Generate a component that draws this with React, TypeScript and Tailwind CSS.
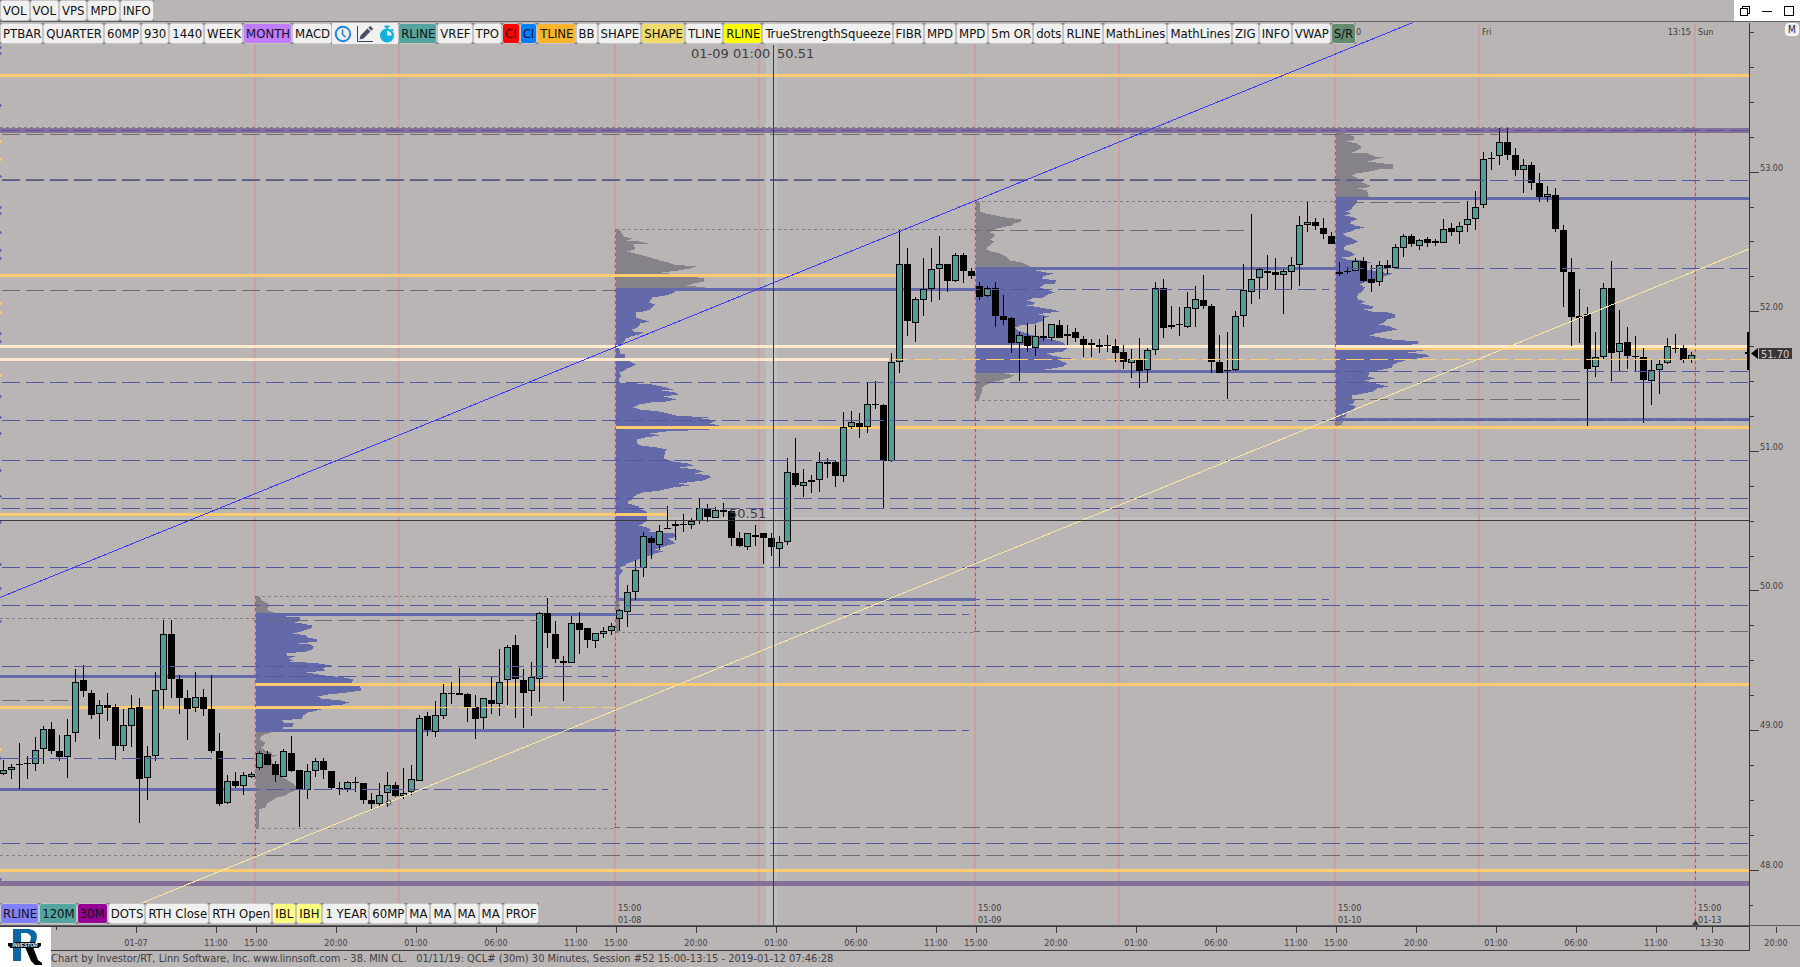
import clsx from "clsx";

type Tool = { label: string; color?: string; wide?: boolean };

const TOP_TOOLS = ["VOL", "VOL", "VPS", "MPD", "INFO"];

const TOOLS_LEFT: Tool[] = [
  { label: "PTBAR" },
  { label: "QUARTER" },
  { label: "60MP" },
  { label: "930" },
  { label: "1440" },
  { label: "WEEK" },
  { label: "MONTH", color: "bg-[#bf7cff]" },
  { label: "MACD" },
];

const TOOLS_RIGHT: Tool[] = [
  { label: "RLINE", color: "bg-[#53a5a2]" },
  { label: "VREF" },
  { label: "TPO" },
  { label: "CI", color: "bg-[#ff0000]" },
  { label: "CI", color: "bg-[#0080ff]" },
  { label: "TLINE", color: "bg-[#ffb42e]" },
  { label: "BB" },
  { label: "SHAPE" },
  { label: "SHAPE", color: "bg-[#f0dc6a]" },
  { label: "TLINE" },
  { label: "RLINE", color: "bg-[#ffff00]" },
  { label: "TrueStrengthSqueeze" },
  { label: "FIBR" },
  { label: "MPD" },
  { label: "MPD" },
  { label: "5m OR" },
  { label: "dots" },
  { label: "RLINE" },
  { label: "MathLines" },
  { label: "MathLines" },
  { label: "ZIG" },
  { label: "INFO" },
  { label: "VWAP" },
  { label: "S/R", color: "bg-[#648a70]" },
];

const BOTTOM_TOOLS: Tool[] = [
  { label: "RLINE", color: "bg-[#8080ff]" },
  { label: "120M", color: "bg-[#53a5a2]" },
  { label: "30M", color: "bg-[#930093]" },
  { label: "DOTS" },
  { label: "RTH Close" },
  { label: "RTH Open" },
  { label: "IBL", color: "bg-[#ffff80]" },
  { label: "IBH", color: "bg-[#ffff80]" },
  { label: "1 YEAR" },
  { label: "60MP" },
  { label: "MA" },
  { label: "MA" },
  { label: "MA" },
  { label: "MA" },
  { label: "PROF" },
];

const UP = 1;
const DN = 0;

// high, body top, body bottom, low, direction
const CANDLES = [
  [760, 770, 774, 775, UP], [764, 767, 770, 779, UP], [743, 764, 765, 789, DN], [756, 763, 764, 779, DN],
  [737, 750, 764, 771, UP], [726, 729, 749, 764, UP], [722, 729, 751, 754, DN], [735, 751, 757, 761, DN],
  [719, 735, 757, 778, UP], [669, 682, 733, 742, UP], [665, 680, 691, 697, DN], [690, 693, 715, 719, DN],
  [700, 705, 714, 739, UP], [693, 705, 708, 721, DN], [704, 707, 746, 760, DN], [709, 725, 746, 751, UP],
  [695, 708, 726, 747, UP], [698, 707, 779, 823, DN], [746, 756, 778, 800, UP], [672, 690, 756, 761, UP],
  [620, 634, 690, 709, UP], [620, 634, 679, 698, DN], [675, 679, 698, 714, DN], [690, 698, 709, 740, DN],
  [672, 697, 708, 712, UP], [689, 697, 709, 716, DN], [675, 709, 751, 753, DN], [733, 751, 804, 806, DN],
  [775, 781, 803, 804, UP], [772, 781, 786, 788, DN], [772, 775, 786, 795, UP], [772, 774, 777, 778, UP],
  [751, 753, 768, 770, UP], [751, 754, 765, 765, DN], [761, 764, 775, 782, DN], [749, 751, 777, 777, UP],
  [736, 753, 771, 772, DN], [770, 770, 789, 827, DN], [764, 771, 790, 799, UP], [758, 761, 771, 777, UP],
  [758, 761, 770, 779, DN], [771, 771, 788, 790, DN], [782, 788, 789, 795, DN], [781, 782, 789, 792, UP],
  [777, 782, 783, 792, DN], [783, 783, 800, 804, DN], [793, 800, 804, 809, DN], [783, 795, 804, 806, UP],
  [772, 785, 793, 807, UP], [782, 785, 796, 797, DN], [768, 793, 796, 799, UP], [765, 779, 792, 795, UP],
  [715, 718, 781, 781, UP], [712, 716, 730, 736, DN], [701, 715, 732, 737, UP], [684, 693, 716, 719, UP],
  [682, 693, 694, 704, DN], [668, 693, 695, 695, DN], [693, 694, 707, 722, DN], [695, 707, 719, 739, DN],
  [698, 698, 718, 729, UP], [677, 700, 704, 714, DN], [649, 682, 704, 716, UP], [645, 647, 680, 705, UP],
  [635, 645, 679, 718, DN], [669, 680, 693, 728, DN], [662, 677, 691, 716, UP], [612, 613, 679, 702, UP],
  [598, 613, 633, 648, DN], [621, 634, 659, 663, DN], [656, 661, 663, 701, DN], [616, 623, 663, 663, UP],
  [612, 623, 630, 654, DN], [628, 628, 640, 648, DN], [633, 633, 641, 648, UP], [627, 631, 634, 638, UP],
  [623, 626, 631, 635, UP], [609, 610, 619, 631, UP], [585, 592, 612, 627, UP], [560, 570, 592, 600, UP],
  [532, 536, 568, 577, UP], [536, 538, 543, 559, DN], [525, 531, 545, 550, UP], [506, 528, 529, 529, DN],
  [521, 524, 526, 540, DN], [514, 524, 525, 532, DN], [518, 521, 525, 529, UP], [499, 508, 521, 524, UP],
  [504, 509, 517, 522, DN], [507, 510, 518, 518, UP], [503, 510, 512, 517, DN], [511, 511, 538, 546, DN],
  [532, 538, 546, 547, DN], [533, 533, 547, 550, UP], [525, 535, 537, 546, DN], [533, 533, 538, 564, DN],
  [533, 538, 547, 556, DN], [536, 542, 549, 567, UP], [458, 472, 542, 545, UP], [438, 473, 485, 487, DN],
  [469, 482, 486, 497, UP], [475, 480, 482, 493, DN], [452, 462, 480, 492, UP], [458, 462, 464, 478, DN],
  [461, 462, 476, 487, DN], [412, 427, 476, 482, UP], [411, 422, 427, 429, UP], [413, 423, 427, 438, DN],
  [383, 404, 427, 433, UP], [381, 404, 405, 409, DN], [404, 405, 461, 508, DN], [353, 362, 461, 462, UP],
  [230, 264, 362, 373, UP], [248, 264, 321, 336, DN], [297, 299, 323, 342, UP], [258, 289, 300, 316, UP],
  [248, 269, 289, 302, UP], [236, 264, 269, 300, UP], [264, 264, 281, 292, DN], [253, 255, 281, 282, UP],
  [253, 255, 271, 283, DN], [268, 271, 276, 279, DN], [282, 286, 297, 300, DN], [286, 288, 296, 297, UP],
  [282, 288, 316, 327, DN], [295, 316, 320, 325, DN], [317, 318, 343, 353, DN], [332, 335, 343, 381, UP],
  [323, 336, 346, 352, DN], [325, 336, 348, 356, UP], [317, 336, 338, 341, DN], [324, 324, 338, 341, UP],
  [320, 325, 338, 338, DN], [325, 334, 336, 345, DN], [328, 332, 338, 342, DN], [336, 339, 345, 357, DN],
  [339, 343, 345, 357, DN], [339, 345, 347, 353, DN], [335, 345, 346, 352, DN], [339, 346, 353, 362, DN],
  [345, 352, 362, 369, DN], [349, 359, 363, 378, UP], [338, 359, 371, 388, DN], [348, 350, 370, 382, UP],
  [282, 288, 350, 355, UP], [279, 288, 328, 338, DN], [306, 325, 327, 329, DN], [307, 324, 325, 336, DN],
  [292, 307, 327, 328, UP], [286, 299, 309, 327, UP], [275, 300, 306, 309, DN], [304, 306, 362, 373, DN],
  [335, 362, 373, 373, DN], [332, 370, 371, 399, DN], [311, 316, 370, 371, UP], [264, 290, 316, 327, UP],
  [214, 279, 292, 304, UP], [268, 269, 278, 299, UP], [255, 271, 273, 290, DN], [258, 272, 275, 290, DN],
  [269, 271, 275, 314, UP], [257, 265, 272, 290, UP], [216, 225, 265, 286, UP], [202, 222, 225, 232, UP],
  [218, 222, 226, 230, DN], [218, 228, 234, 239, DN], [232, 236, 244, 244, DN], [262, 272, 274, 276, DN],
  [267, 271, 272, 274, DN], [258, 261, 271, 271, UP], [257, 261, 281, 282, DN], [265, 279, 283, 292, DN],
  [261, 265, 282, 286, UP], [260, 265, 268, 274, DN], [244, 247, 268, 269, UP], [234, 236, 248, 257, UP],
  [234, 236, 244, 247, DN], [239, 240, 246, 250, UP], [237, 239, 243, 247, DN], [239, 241, 243, 246, DN],
  [219, 229, 243, 243, UP], [223, 228, 232, 236, DN], [222, 226, 232, 244, UP], [201, 219, 225, 232, UP],
  [191, 207, 219, 230, UP], [152, 159, 205, 208, UP], [152, 158, 159, 170, DN], [128, 142, 156, 165, UP],
  [128, 142, 155, 160, DN], [148, 155, 170, 176, DN], [159, 165, 170, 193, UP], [162, 165, 183, 190, DN],
  [173, 183, 197, 202, DN], [186, 194, 197, 202, UP], [188, 195, 229, 232, DN], [225, 230, 272, 307, DN],
  [258, 272, 317, 346, DN], [289, 316, 318, 343, DN], [307, 314, 369, 426, DN], [332, 357, 367, 377, UP],
  [283, 288, 357, 360, UP], [261, 288, 353, 381, DN], [310, 343, 352, 371, UP], [327, 342, 356, 369, DN],
  [336, 356, 357, 371, DN], [348, 357, 380, 423, DN], [360, 370, 381, 405, UP], [360, 364, 370, 394, UP],
  [338, 346, 363, 364, UP], [334, 348, 349, 353, DN], [345, 348, 360, 363, DN], [352, 355, 360, 363, UP],
];

const BLUE = "#6469a9";
const GREY = "#858289";

// volume profiles, [y, width] pairs growing right from x
const PROFILES: { x: number; fill: string; rows: number[][] }[] = [
  { x: 256, fill: GREY, rows: [[596, 3], [600, 6], [603, 12], [606, 13], [608, 11], [610, 12], [612, 18], [613, 18]] },
  {
    x: 256,
    fill: BLUE,
    rows: [
      [613, 30], [616, 30], [617, 44], [620, 44], [622, 39], [623, 46], [625, 56], [627, 56], [629, 51], [631, 45],
      [633, 37], [635, 50], [637, 52], [639, 61], [641, 61], [643, 43], [644, 54], [646, 58], [649, 56], [651, 50],
      [653, 30], [655, 31], [656, 39], [658, 33], [660, 37], [661, 34], [662, 50], [663, 63], [665, 75], [667, 69],
      [668, 67], [670, 69], [672, 51], [675, 69], [677, 88], [679, 97], [682, 96], [686, 104], [690, 105], [692, 91],
      [694, 72], [696, 62], [698, 65], [700, 85], [702, 93], [704, 87], [705, 75], [707, 72], [710, 61], [712, 52],
      [715, 47], [718, 46], [720, 26], [722, 28], [723, 38], [726, 36], [727, 27], [729, 27], [731, 27],
    ],
  },
  {
    x: 256,
    fill: GREY,
    rows: [
      [731, 27], [732, 15], [734, 8], [736, 5], [739, 4], [742, 9], [745, 8], [747, 5], [750, 9], [752, 15], [754, 16],
      [755, 21], [757, 15], [765, 17], [770, 18], [775, 24], [778, 29], [781, 34], [785, 39], [789, 42], [792, 34],
      [795, 29], [797, 21], [800, 16], [803, 11], [807, 9], [809, 3], [828, 3],
    ],
  },
  {
    x: 616,
    fill: GREY,
    rows: [
      [229, 2], [230, 4], [236, 8], [238, 16], [240, 11], [241, 23], [243, 32], [244, 17], [247, 19], [249, 18],
      [251, 11], [253, 19], [255, 27], [257, 34], [260, 44], [262, 52], [264, 58], [266, 80], [268, 74], [270, 62],
      [272, 46], [274, 60], [276, 76], [278, 88], [281, 88], [283, 78], [285, 71], [287, 89], [288, 89],
    ],
  },
  {
    x: 616,
    fill: BLUE,
    rows: [
      [288, 60], [292, 58], [293, 56], [295, 49], [297, 36], [299, 35], [302, 33], [304, 39], [306, 37], [309, 34],
      [311, 27], [312, 20], [317, 20], [319, 26], [321, 33], [323, 24], [325, 23], [327, 21], [329, 16], [331, 18],
      [332, 27], [334, 23], [336, 15], [338, 10], [342, 7], [344, 4], [347, 3], [353, 4], [354, 9], [357, 9], [359, 4],
      [361, 14], [364, 20], [366, 16], [368, 11], [370, 8], [372, 3], [376, 5], [378, 3], [382, 3], [383, 21],
      [384, 36], [386, 46], [389, 57], [390, 46], [392, 59], [394, 62], [396, 48], [399, 60], [401, 50], [402, 35],
      [404, 23], [407, 17], [409, 24], [411, 43], [413, 52], [415, 60], [417, 92], [418, 86], [420, 100], [423, 94],
      [425, 103], [427, 98], [429, 93], [431, 50], [433, 34], [435, 43], [437, 29], [439, 21], [443, 21], [445, 25],
      [447, 41], [449, 51], [451, 49], [458, 48], [461, 57], [463, 72], [465, 77], [467, 64], [469, 80], [471, 87],
      [473, 79], [475, 93], [477, 95], [480, 87], [482, 71], [483, 63], [485, 73], [487, 57], [490, 44], [492, 27],
      [494, 21], [496, 18], [499, 16], [501, 12], [503, 12], [506, 23], [508, 22], [510, 28], [512, 31], [520, 31],
      [523, 27], [525, 23], [527, 31], [529, 35], [531, 33], [533, 58], [536, 61], [538, 52], [541, 57], [543, 59],
      [545, 51], [547, 45], [549, 39], [551, 47], [553, 39], [555, 34], [558, 24], [561, 17], [563, 11], [565, 9],
      [567, 3], [570, 7], [573, 5], [575, 3], [601, 3],
    ],
  },
  { x: 616, fill: GREY, rows: [[601, 3], [632, 3]] },
  {
    x: 976,
    fill: GREY,
    rows: [
      [201, 2], [203, 4], [211, 4], [213, 10], [214, 15], [216, 24], [217, 30], [219, 45], [221, 45], [223, 38],
      [225, 36], [226, 30], [228, 21], [230, 16], [232, 14], [234, 19], [237, 17], [239, 14], [241, 18], [244, 15],
      [246, 12], [249, 10], [251, 15], [253, 24], [256, 30], [260, 34], [262, 46], [264, 50], [266, 54], [267, 55],
    ],
  },
  {
    x: 976,
    fill: BLUE,
    rows: [
      [267, 57], [270, 60], [272, 70], [273, 77], [276, 67], [278, 66], [280, 80], [283, 79], [284, 68], [287, 64],
      [290, 73], [292, 78], [294, 72], [297, 67], [298, 56], [300, 51], [302, 59], [304, 57], [305, 51], [307, 64],
      [309, 76], [311, 83], [313, 67], [314, 63], [316, 73], [318, 66], [320, 67], [323, 60], [325, 44], [327, 39],
      [330, 42], [333, 51], [337, 64], [339, 77], [342, 87], [345, 90], [348, 91], [351, 87], [353, 71], [355, 76],
      [357, 85], [358, 95], [360, 84], [363, 91], [366, 87], [368, 76], [370, 61], [373, 54],
    ],
  },
  {
    x: 976,
    fill: GREY,
    rows: [
      [373, 29], [375, 38], [377, 34], [380, 24], [382, 14], [384, 11], [387, 6], [392, 6], [395, 4], [399, 3], [401, 3],
    ],
  },
  {
    x: 1336,
    fill: GREY,
    rows: [
      [133, 9], [136, 18], [139, 18], [141, 11], [143, 21], [146, 25], [148, 25], [150, 21], [152, 16], [153, 32],
      [156, 39], [157, 47], [159, 39], [161, 32], [163, 48], [164, 57], [168, 57], [169, 42], [171, 33], [173, 20],
      [175, 16], [178, 22], [180, 26], [182, 26], [185, 34], [187, 31], [188, 22], [190, 31], [194, 32], [197, 33],
    ],
  },
  {
    x: 1336,
    fill: BLUE,
    rows: [
      [197, 22], [202, 21], [204, 19], [207, 16], [209, 15], [211, 10], [213, 15], [215, 9], [217, 18], [219, 21],
      [221, 15], [223, 14], [225, 19], [227, 28], [229, 19], [231, 15], [233, 7], [235, 9], [238, 16], [241, 22],
      [243, 18], [245, 10], [247, 8], [249, 8], [251, 14], [254, 19], [256, 14], [257, 6], [259, 11], [260, 26],
      [262, 35], [264, 24], [267, 27], [269, 31], [271, 40], [273, 56], [275, 51], [277, 44], [280, 44], [282, 28],
      [284, 24], [287, 29], [290, 27], [294, 22], [296, 21], [299, 22], [301, 29], [303, 25], [306, 37], [308, 36],
      [309, 28], [311, 36], [312, 52], [314, 59], [317, 59], [319, 51], [322, 48], [324, 43], [326, 54], [329, 61],
      [331, 50], [333, 39], [335, 34], [337, 44], [339, 56], [341, 82], [343, 82], [345, 70], [348, 76], [350, 87],
      [352, 72], [354, 90], [356, 93], [358, 81], [360, 69], [362, 62], [364, 57], [367, 56], [369, 47], [372, 33],
      [376, 32], [378, 39], [380, 29], [382, 36], [384, 44], [386, 52], [388, 41], [391, 37], [393, 27], [395, 16],
      [398, 16], [400, 19], [403, 17], [404, 14], [406, 20], [409, 17], [412, 11], [415, 10], [417, 7], [420, 6],
    ],
  },
  { x: 1336, fill: GREY, rows: [[420, 6], [421, 7], [424, 6], [425, 3], [426, 3]] },
];

const ORANGE = "#ffcb70";
const CREAM = "#ffe9cc";
const PURPLE = "#846f98";
const DASH_BLUE = "#5456a0";
const DASH_GREY = "#6e6c6e";

// [y, height, x1, x2, fill]
const BANDS: [number, number, number, number, string][] = [
  [74, 3, 0, 1749, ORANGE],
  [128, 5, 0, 1749, PURPLE],
  [197, 3, 1336, 1749, BLUE],
  [267, 3, 976, 1336, BLUE],
  [274, 3, 0, 896, ORANGE],
  [288, 3, 616, 976, BLUE],
  [348, 2, 1336, 1749, ORANGE],
  [345, 3, 0, 1749, CREAM],
  [358, 3, 0, 889, CREAM],
  [370, 3, 976, 1336, BLUE],
  [418, 3, 1336, 1749, BLUE],
  [426, 3, 616, 1749, ORANGE],
  [513, 3, 0, 667, ORANGE],
  [598, 3, 616, 976, BLUE],
  [613, 3, 256, 616, BLUE],
  [675, 3, 0, 256, BLUE],
  [683, 3, 256, 1749, ORANGE],
  [706, 3, 0, 435, ORANGE],
  [729, 3, 256, 616, BLUE],
  [788, 3, 0, 256, BLUE],
  [869, 3, 0, 1749, ORANGE],
  [881, 5, 0, 1749, PURPLE],
];

// [y, x1, x2, stroke]
const DASHED: [number, number, number, string][] = [
  [130, 0, 1749, DASH_BLUE],
  [134, 0, 1498, DASH_GREY],
  [179, 0, 1480, DASH_GREY],
  [180, 0, 1749, DASH_BLUE],
  [202, 1334, 1466, DASH_GREY],
  [230, 974, 1250, DASH_GREY],
  [268, 1336, 1749, DASH_BLUE],
  [289, 976, 1329, DASH_BLUE],
  [290, 0, 616, DASH_GREY],
  [359, 892, 1749, ORANGE],
  [371, 1336, 1749, DASH_BLUE],
  [382, 0, 1749, DASH_BLUE],
  [399, 1334, 1586, DASH_GREY],
  [420, 0, 1749, DASH_BLUE],
  [460, 0, 1749, DASH_BLUE],
  [498, 0, 1749, DASH_BLUE],
  [508, 0, 1749, DASH_BLUE],
  [567, 0, 1749, DASH_BLUE],
  [599, 976, 1329, DASH_BLUE],
  [605, 0, 1749, DASH_BLUE],
  [614, 616, 969, DASH_BLUE],
  [620, 254, 537, DASH_GREY],
  [631, 974, 1749, DASH_GREY],
  [666, 0, 1749, DASH_BLUE],
  [676, 256, 608, DASH_BLUE],
  [700, 0, 68, DASH_GREY],
  [707, 436, 615, ORANGE],
  [730, 616, 969, DASH_BLUE],
  [758, 0, 254, DASH_BLUE],
  [789, 256, 608, DASH_BLUE],
  [827, 614, 1749, DASH_GREY],
  [843, 0, 1749, DASH_BLUE],
  [855, 254, 1749, DASH_GREY],
];

// [y, x1, x2]
const DOTTED = [
  [127, 0, 1695],
  [201, 976, 1336],
  [229, 616, 976],
  [400, 976, 1336],
  [596, 256, 616],
  [618, 0, 256],
  [632, 616, 976],
  [828, 256, 616],
  [855, 0, 256],
];

const DAY_LINES = [254, 398, 614, 758, 974, 1118, 1334, 1478, 1694];
const SESSION_LINES = [[255, 596, 855], [615, 229, 827], [975, 201, 631], [1335, 128, 426], [1695, 133, 922]];

const LEFT_MARKS: [number, string][] = [
  [47, BLUE], [53, BLUE], [105, BLUE], [141, ORANGE], [159, ORANGE], [176, BLUE], [207, BLUE], [213, BLUE],
  [232, BLUE], [250, BLUE], [258, BLUE], [303, ORANGE], [312, ORANGE], [333, BLUE], [341, BLUE], [375, ORANGE],
  [396, BLUE], [417, BLUE], [433, BLUE], [470, BLUE], [496, BLUE], [522, BLUE], [564, BLUE], [588, BLUE],
  [621, BLUE], [749, ORANGE], [758, BLUE], [879, BLUE],
];

const SESSIONS: [number, string][] = [[618, "01-08"], [978, "01-09"], [1338, "01-10"], [1698, "01-13"]];

const PRICES: [number, string][] = [
  [171, "53.00"], [310, "52.00"], [450, "51.00"], [589, "50.00"], [728, "49.00"], [868, "48.00"],
];

const TIMES: [number, string][] = [
  [136, "01-07"], [216, "11:00"], [256, "15:00"], [336, "20:00"], [416, "01:00"], [496, "06:00"], [576, "11:00"],
  [616, "15:00"], [696, "20:00"], [776, "01:00"], [856, "06:00"], [936, "11:00"], [976, "15:00"], [1056, "20:00"],
  [1136, "01:00"], [1216, "06:00"], [1296, "11:00"], [1336, "15:00"], [1416, "20:00"], [1496, "01:00"],
  [1576, "06:00"], [1656, "11:00"], [1712, "13:30"], [1776, "20:00"],
];

const profilePath = (x: number, rows: number[][]) => {
  let d = `M${x} ${rows[0][0]}`;
  for (let i = 0; i < rows.length - 1; i++) {
    const [y0, w0] = rows[i];
    const [y1, w1] = rows[i + 1];
    for (let y = y0; y < y1; y++) {
      d += `H${x + Math.round(w0 + ((w1 - w0) * (y - y0)) / (y1 - y0))}V${y + 1}`;
    }
  }
  return `${d}H${x}Z`;
};

const ToolButton = ({ label, color = "bg-[#f0f0f0]", wide = label.length <= 3 }: Tool) => (
  <button
    type="button"
    className={clsx(
      "h-[21px] shrink-0 whitespace-nowrap rounded-[3px] border border-[#c6c4c4] text-[13px] leading-[18px] text-[#101010]",
      wide ? "px-[2px]" : "pl-[2px] pr-px",
      color
    )}
  >
    {label}
  </button>
);

const IconTools = () => (
  <div className="flex h-[21px] w-[66px] shrink-0 items-center justify-around bg-[#f0f0f0]">
    <button type="button" aria-label="Clock">
      <svg viewBox="0 0 18 18" className="size-[18px]" fill="none" stroke="#1e86dc" strokeWidth="2">
        <circle cx="9" cy="9" r="7.2" />
        <path d="M8.5 4.5V9.5L11.5 12.2" strokeWidth="1.6" />
      </svg>
    </button>
    <button type="button" aria-label="Draw">
      <svg viewBox="0 0 18 18" className="size-[18px]">
        <path d="M1.5 1V16.5H17" fill="none" stroke="#3c4356" strokeWidth="1" />
        <path d="M3.5 14.5L4.6 10.4L11.4 3.6L14.4 6.6L7.6 13.4Z" fill="#44506b" />
        <path d="M12.3 2.7L13.6 1.4Q14.3 .9 15 1.5L16.5 3Q17 3.7 16.5 4.4L15.3 5.7Z" fill="#44506b" />
      </svg>
    </button>
    <button type="button" aria-label="Timer">
      <svg viewBox="0 0 18 18" className="size-[18px]">
        <circle cx="9" cy="10.5" r="7" fill="#12b0dc" />
        <rect x="6.5" y="0.5" width="5" height="2" fill="#12b0dc" />
        <path d="M8.2 2H9.8V4H8.2ZM14 3.4L16 5.2L15 6.2L13 4.5Z" fill="#12b0dc" />
        <path d="M9 10.5V5.8A4.7 4.7 0 0 1 13.7 10.5Z" fill="#f0f0f0" />
      </svg>
    </button>
  </div>
);

const WindowControls = () => (
  <div className="flex w-[66px] items-center justify-between bg-white px-[5px]">
    <button type="button" aria-label="Restore">
      <svg viewBox="0 0 12 12" className="size-3" fill="none" stroke="#000" shapeRendering="crispEdges">
        <path d="M1.5 3.5H8.5V10.5H1.5ZM3.5 3.5V1.5H10.5V8.5H8.5" />
      </svg>
    </button>
    <button type="button" aria-label="Minimize">
      <svg viewBox="0 0 12 12" className="size-3" stroke="#000" shapeRendering="crispEdges">
        <path d="M1 6.5H11" />
      </svg>
    </button>
    <button type="button" aria-label="Maximize">
      <svg viewBox="0 0 12 12" className="size-3" fill="none" stroke="#000" shapeRendering="crispEdges">
        <path d="M1.5 1.5H10.5V10.5H1.5Z" />
      </svg>
    </button>
  </div>
);

const Chart = () => (
  <svg viewBox="0 22 1800 905" className="block w-full" fontSize="9" fill="#3f3d42">
    <g shapeRendering="crispEdges">
      {/* cursor highlight */}
      <rect x="766" y="22" width="11" height="903" fill="#c1c0c0" />
      <rect x="0" y="517" width="1749" height="3" fill="#c1c0c0" />

      {DAY_LINES.map((x) => (
        <rect key={x} x={x} y="23" width="2" height="902" fill="#cf9e9e" />
      ))}

      {PROFILES.map((p, i) => (
        <path key={i} d={profilePath(p.x, p.rows)} fill={p.fill} />
      ))}

      {BANDS.map(([y, h, x1, x2, fill]) => (
        <rect key={`${y}-${x1}`} x={x1} y={y} width={x2 - x1} height={h} fill={fill} />
      ))}

      {DOTTED.map(([y, x1, x2]) => (
        <path key={y} d={`M${x1} ${y + 0.5}H${x2}`} stroke="#807d84" strokeDasharray="3 3" />
      ))}
      {SESSION_LINES.map(([x, y1, y2]) => (
        <path key={x} d={`M${x + 0.5} ${y1}V${y2}`} stroke="#77707a" strokeDasharray="3 3" />
      ))}

      {CANDLES.map(([high, top, bottom, low, dir], i) => (
        <g key={i}>
          <rect x={i * 8 + 3} y={high} width="1" height={low - high} fill="#000" />
          <rect x={i * 8} y={top} width="7" height={bottom - top} fill="#000" />
          {dir === UP && <rect x={i * 8 + 1} y={top + 1} width="5" height={Math.max(bottom - top - 2, 1)} fill="#529c99" />}
        </g>
      ))}

      {DASHED.map(([y, x1, x2, stroke]) => (
        <path
          key={`${y}-${x1}`}
          d={`M${x1} ${y + 0.5}H${x2}`}
          stroke={stroke}
          strokeDasharray="18 6"
          strokeDashoffset={(x1 + 22) % 24}
        />
      ))}

      {LEFT_MARKS.map(([y, fill]) => (
        <path key={y} d={`M0 ${y - 1}H1V${y}H2V${y + 1}H1V${y + 2}H0Z`} fill={fill} />
      ))}

      {/* trend lines */}
      <path d="M0 597.5L1413 22.5" stroke="#3c3cff" />
      <path d="M142 903L450 777.5L1749 249" fill="none" stroke="#fbe7a2" />

      {/* crosshair */}
      <rect x="0" y="520" width="1749" height="1" fill="#3a393c" />
      <rect x="773" y="45" width="1" height="880" fill="#3a393c" />

      {/* price axis */}
      <rect x="1749" y="23" width="1" height="904" fill="#3a383a" />
      {Array.from({ length: 26 }, (_, i) => (
        <rect key={i} x="1750" y={Math.round(32 + i * 34.9)} width={i % 4 === 0 && i > 0 ? 9 : i === 25 ? 3 : 4} height="1" fill="#3a383a" />
      ))}
      <rect x="1747" y="332" width="2" height="38" fill="#000" />
      <rect x="1745" y="352" width="3" height="2" fill="#000" />
      <rect x="1759" y="348" width="33" height="11" fill="#38363a" />

      {/* time axis */}
      <rect x="0" y="925" width="1800" height="1" fill="#5e5c5e" />
      <rect x="0" y="926" width="1749" height="1" fill="#3a383a" />
    </g>

    <path d="M1751 353.5L1758 348V359Z" fill="#000" />
    <path d="M1695.500 920L1699 925H1692Z" fill="#3a383a" />
    <circle cx="388.500" cy="802.500" r="2.500" fill="none" stroke="#55535a" />

    {PRICES.map(([y, label]) => (
      <text key={label} x="1760" y={y}>{label}</text>
    ))}
    <text x="1761" y="358" fontSize="11" fill="#d8ccc4">51.70</text>

    {SESSIONS.map(([x, date]) => (
      <g key={date}>
        <text x={x} y="911">15:00</text>
        <text x={x} y="923">{date}</text>
      </g>
    ))}
    <text x="1356" y="35">0</text>
    <text x="1482" y="35">Fri</text>
    <text x="1691" y="35" textAnchor="end">13:15</text>
    <text x="1698" y="35">Sun</text>

    <g fontFamily="'DejaVu Sans', sans-serif" fontSize="13">
      <text x="691" y="58">01-09 01:00</text>
      <text x="777" y="58">50.51</text>
      <text x="729" y="518">50.51</text>
    </g>
  </svg>
);

const TimeAxis = () => (
  <svg viewBox="51 927 1749 24" className="block w-full" fontSize="9" textAnchor="middle">
    <g fill="#3a383a" shapeRendering="crispEdges">
      <rect x="56" y="927" width="1" height="3" />
      <rect x="1696" y="927" width="1" height="3" />
      {TIMES.map(([x]) => (
        <rect key={x} x={x} y="927" width="1" height="6" />
      ))}
      <rect x="51" y="950" width="1699" height="1" />
      <rect x="1749" y="927" width="1" height="24" />
    </g>
    <g fill="#3f3d42">
      {TIMES.map(([x, label]) => (
        <text key={x} x={x} y="946">{label}</text>
      ))}
    </g>
  </svg>
);

const Logo = () => (
  <svg viewBox="0 0 51 40" className="block h-10 w-[51px] shrink-0 bg-white">
    <path d="M13 2H29Q37 3 37 10Q37 14 34 17H28Q31 14 31 10Q30 7 27 6H21V34H13Z" fill="#0a67a3" />
    <path d="M25 20L33 20L38 33L42 36V38H35L31 34Z" fill="#050505" />
    <path d="M8 16H14L15 15H35L36 16H41V19L39 20V21H10V20L8 19Z" fill="#050505" />
    <text x="25" y="20" textAnchor="middle" fontFamily="'Liberation Sans', sans-serif" fontSize="5" fontStyle="italic" fontWeight="bold" fill="#fff">INVESTOR</text>
  </svg>
);

export default function App() {
  return (
    <div className="w-full overflow-hidden bg-[#b9b5b4] font-['DejaVu_Sans_Condensed','DejaVu_Sans',sans-serif] text-[#3f3d42]">
      <header className="flex h-[22px] justify-between border-b border-[#626062]">
        <nav aria-label="Indicators" className="flex bg-[#808080]">
          {TOP_TOOLS.map((label, i) => (
            <ToolButton key={i} label={label} wide />
          ))}
        </nav>
        <WindowControls />
      </header>

      <main className="relative">
        <Chart />
        <nav aria-label="Chart tools" className="absolute left-0 top-px flex bg-[#808080]">
          {TOOLS_LEFT.map((tool, i) => (
            <ToolButton key={i} {...tool} />
          ))}
          <IconTools />
          {TOOLS_RIGHT.map((tool, i) => (
            <ToolButton key={i} {...tool} />
          ))}
        </nav>
        <nav aria-label="Overlays" className="absolute bottom-[3px] left-0 flex bg-[#808080]">
          {BOTTOM_TOOLS.map((tool, i) => (
            <ToolButton key={i} {...tool} />
          ))}
        </nav>
        <button
          type="button"
          className="absolute right-px top-px h-[13px] w-[14px] rounded-sm border border-white bg-[#ececf2] text-[10px] leading-[11px] text-[#22224a]"
        >
          M
        </button>
      </main>

      <footer className="flex h-10">
        <Logo />
        <div className="min-w-0 flex-1">
          <TimeAxis />
          <p className="whitespace-pre text-[11px] leading-4">
            Chart by Investor/RT, Linn Software, Inc. www.linnsoft.com - 38. MIN CL.   01/11/19: QCL# (30m) 30 Minutes, Session #52 15:00-13:15 - 2019-01-12 07:46:28
          </p>
        </div>
      </footer>
    </div>
  );
}
